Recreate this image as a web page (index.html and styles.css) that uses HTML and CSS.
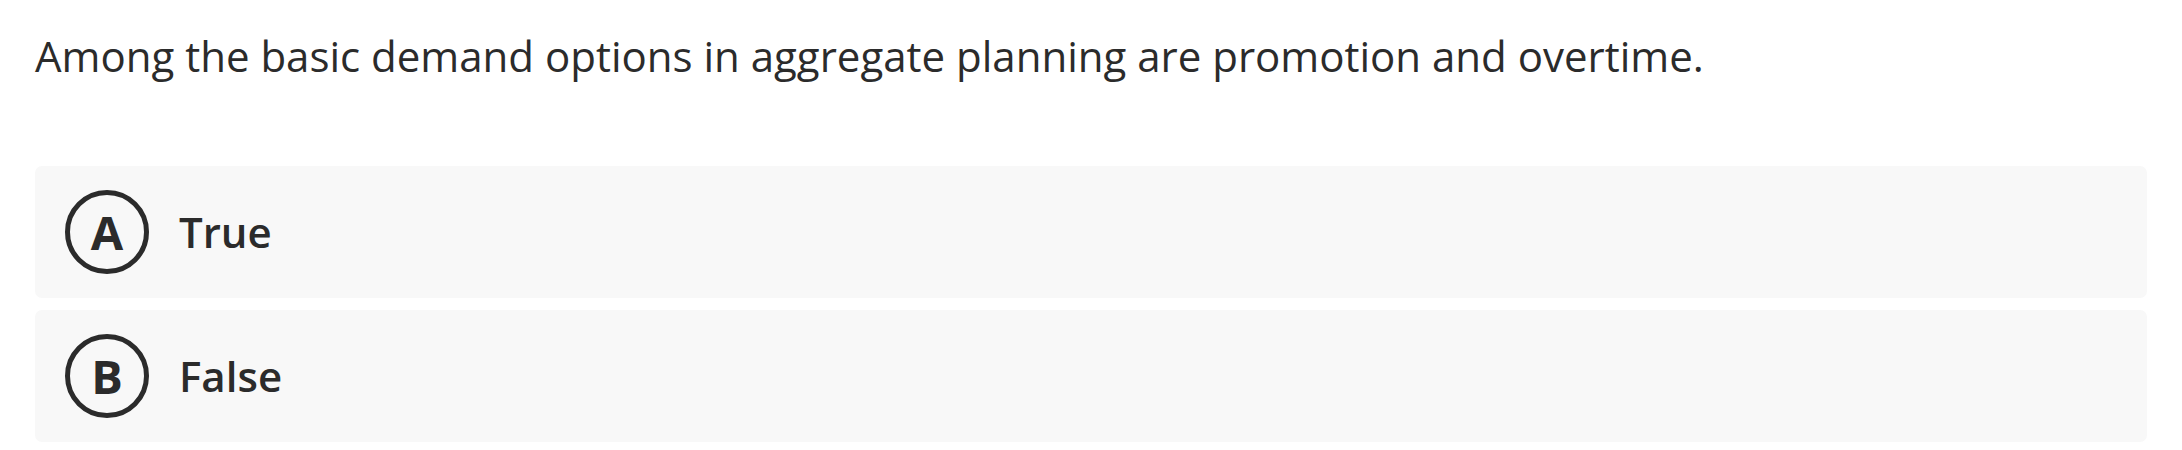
FILE: index.html
```html
<!DOCTYPE html>
<html lang="en">
<head>
<meta charset="utf-8">
<link rel="stylesheet" href="styles.css">
</head>
<body>
<div class="quiz">
  <p class="question">Among the basic demand options in aggregate planning are promotion and overtime.</p>
  <div class="options">
    <div class="option">
      <span class="badge">A</span>
      <span class="label">True</span>
    </div>
    <div class="option">
      <span class="badge">B</span>
      <span class="label">False</span>
    </div>
  </div>
</div>
</body>
</html>
```

FILE: styles.css
```css
html, body {
  margin: 0;
  padding: 0;
  background: #ffffff;
}
body {
  font-family: "Open Sans", "Liberation Sans", sans-serif;
  color: #2b2b2b;
}
.quiz {
  padding: 26px 35px 0 35px;
}
.question {
  margin: 0;
  font-size: 42px;
  line-height: 60px;
  font-weight: 400;
}
.options {
  margin-top: 80px;
  display: flex;
  flex-direction: column;
  gap: 12px;
}
.option {
  display: flex;
  align-items: center;
  height: 132px;
  box-sizing: border-box;
  padding-left: 30px;
  background: #f8f8f8;
  border-radius: 7px;
  gap: 30px;
}
.badge {
  width: 84px;
  height: 84px;
  box-sizing: border-box;
  border: 5.5px solid #2b2b2b;
  border-radius: 50%;
  display: flex;
  align-items: center;
  justify-content: center;
  font-size: 47px;
  font-weight: 700;
  line-height: 1;
}
.label {
  font-size: 42px;
  font-weight: 600;
  line-height: 1;
}
```
